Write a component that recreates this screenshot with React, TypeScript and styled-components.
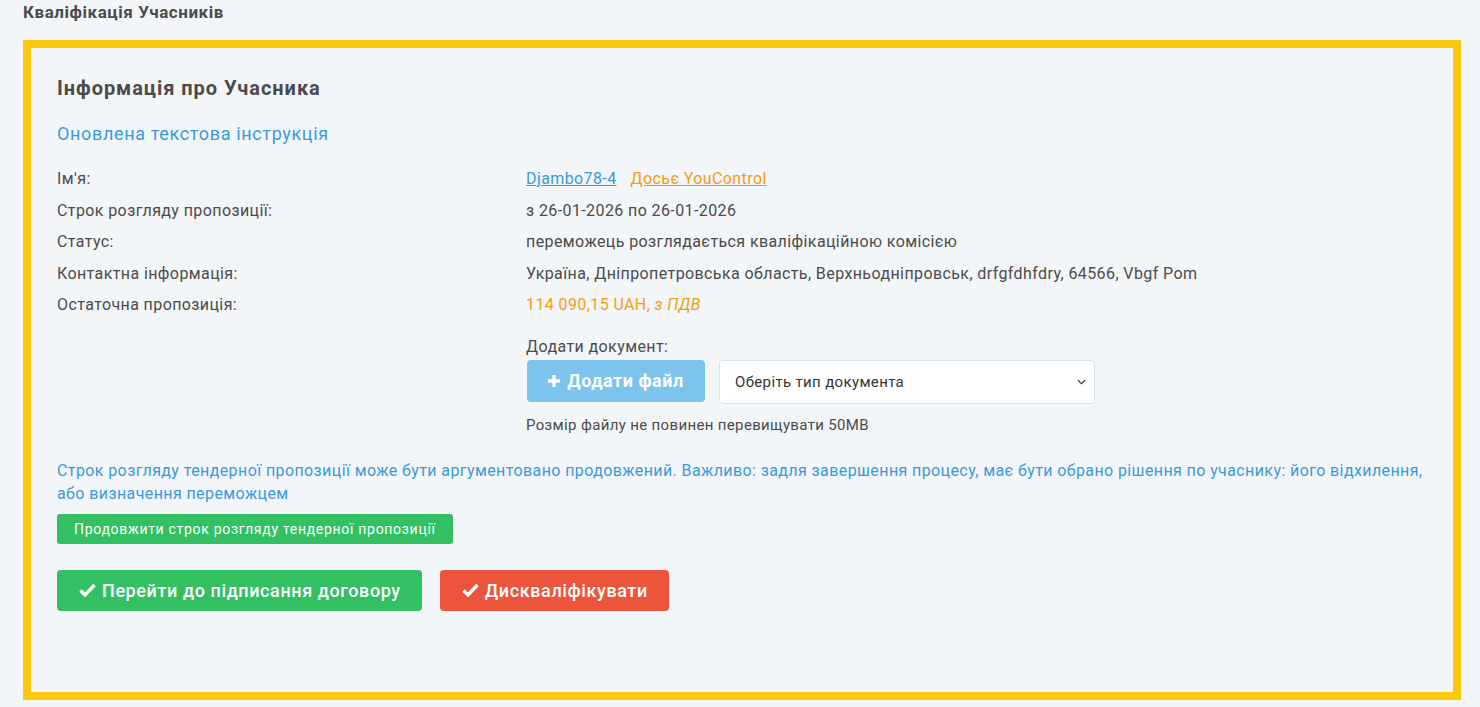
import styled, { createGlobalStyle } from "styled-components";

const GlobalStyle = createGlobalStyle`
  body {
    margin: 0;
    background: #f3f6f9;
    font-family: Roboto, "Noto Sans", Arial, sans-serif;
    color: #4a4a4a;
  }
  * {
    box-sizing: border-box;
  }
`;

interface InfoRow {
  label: string;
  value: React.ReactNode;
}

const CheckIcon = () => (
  <svg width="17" height="14" viewBox="0 0 17 14" aria-hidden="true">
    <path d="M1.5 7.5 L6 12 L15.5 2" fill="none" stroke="#fff" strokeWidth="3.4" strokeLinejoin="miter" />
  </svg>
);

const PlusIcon = () => (
  <svg width="12" height="12" viewBox="0 0 12 12" aria-hidden="true">
    <path d="M4.3 0h3.4v4.3H12v3.4H7.7V12H4.3V7.7H0V4.3h4.3z" fill="#fff" />
  </svg>
);

const ChevronIcon = () => (
  <svg width="9" height="6" viewBox="0 0 9 6" aria-hidden="true">
    <path d="M1 1.2l3.5 3.5L8 1.2" fill="none" stroke="#444" strokeWidth="1.3" />
  </svg>
);

const App = () => {
  const rows: InfoRow[] = [
    {
      label: "Ім'я:",
      value: (
        <>
          <LinkTxt href="#">Djambo78-4</LinkTxt>
          <LinkTxt href="#" $color="#f39c12">
            Досьє YouControl
          </LinkTxt>
        </>
      ),
    },
    { label: "Строк розгляду пропозиції:", value: "з 26-01-2026 по 26-01-2026" },
    { label: "Статус:", value: "переможець розглядається кваліфікаційною комісією" },
    {
      label: "Контактна інформація:",
      value: "Україна, Дніпропетровська область, Верхньодніпровськ, drfgfdhfdry, 64566, Vbgf Pom",
    },
    {
      label: "Остаточна пропозиція:",
      value: (
        <PriceTxt>
          114 090,15 UAH, <em>з ПДВ</em>
        </PriceTxt>
      ),
    },
  ];

  return (
    <>
      <GlobalStyle />
      <Page>
        <PageTitle>Кваліфікація Учасників</PageTitle>
        <Card>
          <CardTitle>Інформація про Учасника</CardTitle>
          <InstructionLink href="#">Оновлена текстова інструкція</InstructionLink>
          <InfoTable>
            {rows.map((row) => (
              <InfoLine key={row.label}>
                <InfoLabel>{row.label}</InfoLabel>
                <InfoValue>{row.value}</InfoValue>
              </InfoLine>
            ))}
          </InfoTable>
          <UploadBlock>
            <UploadLabel>Додати документ:</UploadLabel>
            <UploadRow>
              <AddFileBtn>
                <PlusIcon />
                Додати файл
              </AddFileBtn>
              <SelectWrap>
                <DocSelect defaultValue="">
                  <option value="">Оберіть тип документа</option>
                </DocSelect>
                <SelectArrow>
                  <ChevronIcon />
                </SelectArrow>
              </SelectWrap>
            </UploadRow>
            <UploadNote>Розмір файлу не повинен перевищувати 50MB</UploadNote>
          </UploadBlock>
          <Notice>
            Строк розгляду тендерної пропозиції може бути аргументовано продовжений. Важливо: задля
            завершення процесу, має бути обрано рішення по учаснику: його відхилення, або визначення
            переможцем
          </Notice>
          <SmallBtn>Продовжити строк розгляду тендерної пропозиції</SmallBtn>
          <ActionRow>
            <ActionBtn $color="#33c063">
              <CheckIcon />
              Перейти до підписання договору
            </ActionBtn>
            <ActionBtn $color="#ec553c">
              <CheckIcon />
              Дискваліфікувати
            </ActionBtn>
          </ActionRow>
        </Card>
      </Page>
    </>
  );
};

const Page = styled.div`
  padding: 0 19px 0 23px;
  min-height: 707px;
`;

const PageTitle = styled.div`
  font-weight: 700;
  font-size: 17px;
  letter-spacing: 0.55px;
  line-height: 20px;
  padding-top: 2px;
  color: #4b4b4b;
  margin-bottom: 18px;
`;

const Card = styled.div`
  border: 8px solid #fcc80b;
  height: 660px;
  padding: 26px 26px 0 26px;
  display: flex;
  flex-direction: column;
  align-items: flex-start;
`;

const CardTitle = styled.div`
  font-weight: 700;
  font-size: 20px;
  letter-spacing: 0.95px;
  line-height: 28px;
  color: #4b4b4b;
`;

const InstructionLink = styled.a`
  margin-top: 20px;
  font-size: 18px;
  letter-spacing: 0.65px;
  line-height: 24px;
  color: #3a9add;
  text-decoration: none;
`;

const InfoTable = styled.div`
  margin-top: 17px;
  display: flex;
  flex-direction: column;
  width: 100%;
`;

const InfoLine = styled.div`
  display: grid;
  grid-template-columns: 469px 1fr;
  font-size: 16px;
  letter-spacing: 0.4px;
  line-height: 31.5px;
  color: #4b4b4b;
`;

const InfoLabel = styled.div``;

const InfoValue = styled.div`
  display: flex;
  gap: 14px;
`;

const LinkTxt = styled.a<{ $color?: string }>`
  color: ${(props) => props.$color || "#3a9add"};
  text-decoration: underline;
`;

const PriceTxt = styled.span`
  color: #f39c12;
  em {
    font-style: italic;
  }
`;

const UploadBlock = styled.div`
  margin: 16px 0 0 469px;
  display: flex;
  flex-direction: column;
`;

const UploadLabel = styled.div`
  font-size: 16px;
  letter-spacing: 0.4px;
  line-height: 20px;
  color: #4b4b4b;
`;

const UploadRow = styled.div`
  display: flex;
  gap: 14px;
  margin-top: 3px;
`;

const AddFileBtn = styled.button`
  display: flex;
  align-items: center;
  justify-content: center;
  gap: 7px;
  width: 178px;
  height: 42px;
  margin-left: 1px;
  border: none;
  border-radius: 4px;
  background: #7cc3ee;
  color: #fff;
  font-family: inherit;
  font-weight: 700;
  font-size: 18px;
  letter-spacing: 0.5px;
`;

const SelectWrap = styled.div`
  position: relative;
  width: 376px;
  height: 44px;
`;

const DocSelect = styled.select`
  appearance: none;
  width: 100%;
  height: 100%;
  border: 1px solid #dcdfe3;
  border-radius: 4px;
  background: #fff;
  padding: 0 24px 0 15px;
  font-family: inherit;
  font-size: 15px;
  letter-spacing: 0.35px;
  color: #333;
`;

const SelectArrow = styled.span`
  position: absolute;
  right: 9px;
  top: 19px;
  display: flex;
  pointer-events: none;
`;

const UploadNote = styled.div`
  margin-top: 11px;
  font-size: 15px;
  letter-spacing: 0.35px;
  line-height: 20px;
  color: #4b4b4b;
`;

const Notice = styled.div`
  margin-top: 24px;
  font-size: 16px;
  letter-spacing: 0.4px;
  line-height: 23px;
  color: #3a9add;
`;

const SmallBtn = styled.button`
  margin-top: 9px;
  height: 30px;
  padding: 0 17px;
  border: none;
  border-radius: 3px;
  background: #33c063;
  color: #fff;
  font-family: inherit;
  font-size: 14px;
  letter-spacing: 0.7px;
`;

const ActionRow = styled.div`
  display: flex;
  gap: 18px;
  margin-top: 26px;
`;

const ActionBtn = styled.button<{ $color: string }>`
  display: flex;
  align-items: center;
  gap: 6px;
  height: 41px;
  padding: 0 21px 0 22px;
  border: none;
  border-radius: 4px;
  background: ${(props) => props.$color};
  color: #fff;
  font-family: inherit;
  font-weight: 500;
  font-size: 18px;
  letter-spacing: 0.6px;
`;

export default App;
